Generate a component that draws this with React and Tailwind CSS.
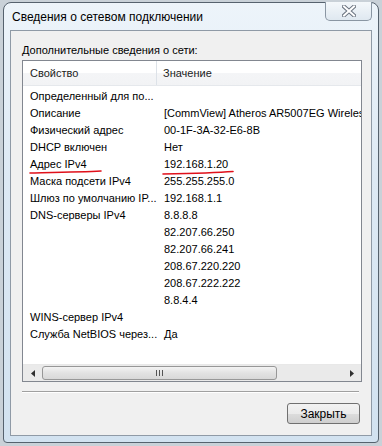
import React from "react";

const rows = [
  ["Определенный для по...", ""],
  ["Описание", "[CommView] Atheros AR5007EG Wireless"],
  ["Физический адрес", "00-1F-3A-32-E6-8B"],
  ["DHCP включен", "Нет"],
  ["Адрес IPv4", "192.168.1.20"],
  ["Маска подсети IPv4", "255.255.255.0"],
  ["Шлюз по умолчанию IP...", "192.168.1.1"],
  ["DNS-серверы IPv4", "8.8.8.8"],
  ["", "82.207.66.250"],
  ["", "82.207.66.241"],
  ["", "208.67.220.220"],
  ["", "208.67.222.222"],
  ["", "8.8.4.4"],
  ["WINS-сервер IPv4", ""],
  ["Служба NetBIOS через...", "Да"],
];

const CloseGlyph = () => (
  <svg width="14" height="12" viewBox="0 0 14 12">
    <path d="M2 1.5 L12 10.5 M12 1.5 L2 10.5" stroke="#6b7480" strokeWidth="4" strokeLinecap="square" />
    <path d="M2 1.5 L12 10.5 M12 1.5 L2 10.5" stroke="#ffffff" strokeWidth="2" strokeLinecap="square" />
  </svg>
);

const App = () => {
  return (
    <div
      className="w-[382px] h-[446px] overflow-hidden bg-[#c9d1d8] flex pl-[3px] pt-[2px]"
      style={{ fontFamily: '"Liberation Sans", Arial, sans-serif' }}
    >
      {/* window */}
      <div className="w-[376px] h-[441px] flex flex-col rounded-t-[8px] rounded-b-[4px] border border-[#56626e] bg-[linear-gradient(180deg,#edf4fa_0%,#dde9f4_40%,#d2e2f0_100%)] px-[6px] pb-[6px]">
        {/* title bar */}
        <div className="h-[27px] flex items-start justify-between">
          <div className="pl-[2px] pt-[7px] text-[12px] text-black leading-[15px]">
            Сведения о сетевом подключении
          </div>
          <div className="w-[47px] h-[19px] -mt-px flex items-center justify-center rounded-b-[5px] border border-t-0 border-[#8a96a3] bg-[linear-gradient(180deg,#f4f8fb,#dfe8f0)]">
            <CloseGlyph />
          </div>
        </div>

        {/* client */}
        <div className="flex-1 flex flex-col bg-[#f0f0f0] border border-[#8f9aa6] pl-[11px] pr-[10px] pt-[12px]">
          <div className="text-[11px] leading-[15px] text-black">
            Дополнительные сведения о сети:
          </div>

          {/* list view */}
          <div className="relative mt-[2px] w-[340px] h-[322px] border border-[#828790] bg-white flex flex-col">
            {/* header */}
            <div className="h-[25px] flex text-[11px] text-[#1c1c1c] bg-[linear-gradient(180deg,#ffffff_0%,#ffffff_50%,#f4f5f7_51%,#f2f3f5_100%)] border-b border-[#e5e8ec]">
              <div className="w-[134px] pl-[7px] flex items-center border-r border-[#dde2e8]">Свойство</div>
              <div className="pl-[6px] flex items-center">Значение</div>
            </div>

            {/* rows */}
            <div className="flex-1 pt-[2px] text-[11px] text-black">
              {rows.map((r, i) => (
                <div key={i} className="h-[17px] flex items-center whitespace-nowrap leading-[17px]">
                  <div className="w-[134px] pl-[7px] overflow-hidden">{r[0]}</div>
                  <div className="flex-1 pl-[7px] overflow-hidden">{r[1]}</div>
                </div>
              ))}
            </div>

            {/* horizontal scrollbar */}
            <div className="h-[17px] flex items-center bg-[#eaeaea] border-t border-[#e8e8e8]">
              <div className="w-[19px] h-full flex items-center justify-center">
                <svg width="4" height="7" viewBox="0 0 4 7"><path d="M4 0 L0 3.5 L4 7 Z" fill="#303030" /></svg>
              </div>
              <div className="w-[235px] h-[14px] rounded-[3px] border border-[#979797] bg-[linear-gradient(180deg,#f3f3f3,#e2e2e2_50%,#d8d8d8)] flex items-center justify-center gap-[2px]">
                <span className="w-px h-[6px] bg-[#555]" />
                <span className="w-px h-[6px] bg-[#555]" />
                <span className="w-px h-[6px] bg-[#555]" />
              </div>
              <div className="flex-1" />
              <div className="w-[19px] h-full flex items-center justify-center">
                <svg width="4" height="7" viewBox="0 0 4 7"><path d="M0 0 L4 3.5 L0 7 Z" fill="#303030" /></svg>
              </div>
            </div>

            {/* red hand-drawn underlines */}
            <svg className="absolute left-0 top-0 pointer-events-none" width="340" height="200">
              <path d="M7 112 C 30 111.5, 60 111, 78 110" stroke="#e0101a" strokeWidth="1.6" fill="none" strokeLinecap="round" />
              <path d="M140 113 C 165 112.5, 190 112, 210 110.5" stroke="#e0101a" strokeWidth="1.6" fill="none" strokeLinecap="round" />
            </svg>
          </div>

          {/* separator */}
          <div className="mt-[9px] w-[337px] h-[2px] border-t border-[#a0a0a0] border-b border-b-white" />

          {/* button */}
          <div className="mt-[10px] flex justify-end pr-[1px]">
            <div className="w-[73px] h-[21px] rounded-[3px] border border-[#707070] bg-[linear-gradient(180deg,#f2f2f2_0%,#ebebeb_50%,#dddddd_51%,#cfcfcf_100%)] flex items-center justify-center text-[12px] text-black">
              Закрыть
            </div>
          </div>
        </div>
      </div>
    </div>
  );
};

export default App;
